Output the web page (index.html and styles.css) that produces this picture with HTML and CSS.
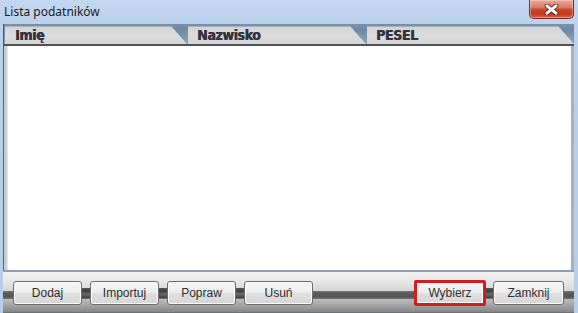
FILE: index.html
```html
<!DOCTYPE html>
<html lang="pl">
<head>
<meta charset="utf-8">
<title>Lista podatników</title>
<link rel="stylesheet" href="styles.css">
</head>
<body>
<div class="window">
  <div class="titlebar">
    <span class="title">Lista podatników</span>
    <div class="close">
      <svg width="15" height="11" viewBox="0 0 15 11"><path d="M3 1.8 L12 9.2 M12 1.8 L3 9.2" stroke="#5a1a10" stroke-width="4.6" stroke-linecap="round"/><path d="M3 1.8 L12 9.2 M12 1.8 L3 9.2" stroke="#ffffff" stroke-width="3" stroke-linecap="round"/></svg>
    </div>
  </div>
  <div class="client">
    <div class="header">
      <div class="col c1">Imię</div>
      <div class="col c2">Nazwisko</div>
      <div class="col c3">PESEL</div>
    </div>
    <div class="list"></div>
    <div class="toolbar">
      <button class="btn">Dodaj</button>
      <span class="link"></span>
      <button class="btn">Importuj</button>
      <span class="link"></span>
      <button class="btn">Popraw</button>
      <span class="link"></span>
      <button class="btn">Usuń</button>
      <span class="spacer"></span>
      <button class="btn sel">Wybierz</button>
      <span class="link small"></span>
      <button class="btn last">Zamknij</button>
    </div>
  </div>
</div>
</body>
</html>
```
FILE: styles.css
```css
html, body {
  margin: 0;
  padding: 0;
  background: #b9cfe9;
}
.window {
  width: 578px;
  height: 313px;
  display: flex;
  flex-direction: column;
  background: linear-gradient(to bottom, #c3d7ef 0, #bcd2ec 24px, #b6cde8 100%);
  box-sizing: border-box;
  overflow: hidden;
}
.titlebar {
  height: 24px;
  display: flex;
  align-items: flex-start;
  flex: none;
}
.title {
  font-family: "Noto Sans", "Liberation Sans", sans-serif;
  font-size: 12px;
  color: #1b1b1b;
  padding-left: 4px;
  line-height: 12px;
  margin-top: 6px;
}
.close {
  margin-left: auto;
  margin-right: 4px;
  width: 45px;
  height: 19px;
  box-sizing: border-box;
  border: 1px solid #7a2c22;
  border-top: none;
  border-radius: 0 0 5px 5px;
  background: linear-gradient(to bottom, #e8a99c 0, #dc7c68 40%, #c7412a 55%, #c33a22 80%, #d9684c 100%);
  box-shadow: inset 0 0 0 1px rgba(255,220,210,0.45);
  display: flex;
  align-items: center;
  justify-content: center;
}
.close svg { display: block; }
.client {
  flex: 1;
  margin: 0 4px 0 3px;
  display: flex;
  flex-direction: column;
  min-height: 0;
}
.header {
  height: 22px;
  flex: none;
  box-sizing: border-box;
  display: flex;
  padding: 2px 0 0 1px;
  background: linear-gradient(to bottom, #7990aa 0, #6f88a4 30%, #8ea4bb 100%);
  border-bottom: 2px solid #4f5358;
  border-left: 1px solid #4d5966;
}
.col {
  height: 18px;
  box-sizing: border-box;
  border-top: 1px solid #a6b1bd;
  background: linear-gradient(to bottom, #d0d2d5 0, #dcdcdc 40%, #d6d6d6 100%);
  clip-path: polygon(0 0, calc(100% - 16px) 0, 100% 100%, 0 100%);
  font-family: "DejaVu Sans Condensed", "DejaVu Sans", sans-serif;
  font-weight: bold;
  font-size: 14px;
  letter-spacing: -0.4px;
  line-height: 17px;
  color: #33343f;
  text-shadow: 0.5px 0 0 #33343f;
  padding-left: 10px;
}
.c1 { width: 182px; }
.c2 { width: 178px; margin-left: 1px; padding-left: 9px; }
.c3 { width: 207px; margin-left: 1px; padding-left: 9px; }
.list {
  flex: 1;
  background: #ffffff;
  border-left: 4px solid #c9ced4;
  border-right: 3px solid #a9b2bc;
  box-shadow: inset 1px 0 0 #e4e8ec;
  position: relative;
}
.list::before {
  content: "";
  position: absolute;
  left: -4px;
  top: 0;
  bottom: 0;
  width: 1px;
  background: #55606c;
}
.toolbar {
  height: 43px;
  flex: none;
  box-sizing: border-box;
  border-top: 2px solid #8f9fb2;
  border-bottom: 1px solid #6f7378;
  display: flex;
  align-items: center;
  padding: 0 10px 0 10px;
  background:
    linear-gradient(to bottom, transparent 19px, #7a7a7a 19px, #5a5a5a 21px, #555555 25px, #777777 27px, transparent 27px),
    linear-gradient(to bottom, #f2f2f2 0, #e6e6e6 10px, #d2d2d2 20px, #b2b2b2 30px, #868686 40px);
}
.btn {
  width: 69px;
  height: 24px;
  box-sizing: border-box;
  margin: 1px 0 0 0;
  padding: 0;
  border: 1px solid #6e6e6e;
  border-radius: 3px;
  background: linear-gradient(to bottom, #f6f6f6 0, #ededed 45%, #dedede 55%, #d6d6d6 100%);
  box-shadow: inset 0 0 0 1px #fbfbfb;
  font-family: "Liberation Sans", sans-serif;
  font-size: 12px;
  color: #2e2e2e;
  line-height: 20px;
  text-align: center;
}
.btn.sel {
  width: 72px;
  height: 26px;
  border: 3px solid #d41c1c;
  border-radius: 2px;
}
.btn.last { width: 71px; }
.link {
  width: 8px;
  height: 10px;
  margin-top: 1px;
  background: linear-gradient(to bottom, #5a5a5a 0, #3c3c3c 30%, #6a6a6a 60%, #404040 100%);
  flex: none;
}
.link.small { width: 7px; }
.spacer { flex: 1; }
```
